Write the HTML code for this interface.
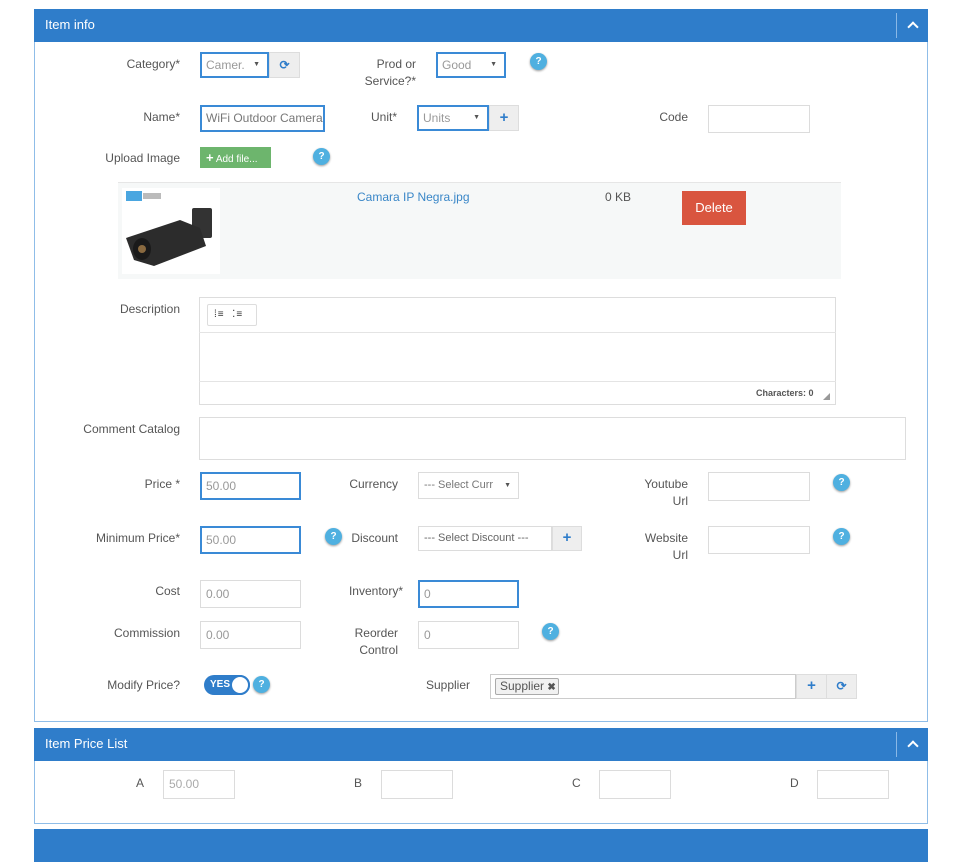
<!DOCTYPE html>
<html><head><meta charset="utf-8"><style>
*{box-sizing:border-box;margin:0;padding:0}
body{width:960px;height:833px;background:#fff;font-family:"Liberation Sans",sans-serif;font-size:12px;color:#555;position:relative;overflow:hidden}
.a{position:absolute}
.hd{position:absolute;left:34px;width:894px;height:33px;background:#2f7dca;color:#fff;font-size:13px;line-height:31px;padding-left:11px}
.hd .cv{position:absolute;right:0;top:4px;width:32px;height:25px;border-left:1px solid #8ab8e6}
.hd .cv:after{content:"";position:absolute;left:12px;top:10px;width:6px;height:6px;border-left:2.5px solid #fff;border-top:2.5px solid #fff;transform:rotate(45deg)}
.body{position:absolute;left:34px;width:894px;border:1px solid #8fbde8;border-top:none}
.l{position:absolute;text-align:right;width:170px;line-height:17px}
.in{position:absolute;border:1px solid #dcdcdc;background:#fff;padding-left:5px;color:#999;font-size:12px}
.bl{border:2px solid #3a8ad6;padding-left:4px}
.sel:after{content:"▼";position:absolute;right:7px;font-size:7px;color:#555}
.btn{position:absolute;background:#eee;border:1px solid #ddd;color:#2f7dca;text-align:center;font-weight:bold;font-size:15px}
.q{position:absolute;width:17px;height:17px;border-radius:50%;background:#4fb0e0;color:#fff;font-size:10px;font-weight:bold;text-align:center;line-height:17px;box-shadow:0 1px 2px #999}
</style></head><body>

<div class="hd" style="top:9px">Item info<div class="cv"></div></div>
<div class="body" style="top:42px;height:680px"></div>

<div class="l" style="left:10px;top:56px">Category*</div>
<div class="in bl sel" style="left:200px;top:52px;width:69px;height:26px;line-height:22px">Camer.</div>
<div class="btn" style="left:269px;top:52px;width:31px;height:26px;line-height:24px;font-size:12px">⟳</div>
<div class="l" style="left:246px;top:56px">Prod or<br>Service?*</div>
<div class="in bl sel" style="left:436px;top:52px;width:70px;height:26px;line-height:22px">Good</div>
<div class="q" style="left:530px;top:53px">?</div>

<div class="l" style="left:10px;top:109px">Name*</div>
<div class="in bl" style="left:200px;top:105px;width:125px;height:27px;line-height:23px;color:#777;font-size:12px;white-space:nowrap;overflow:hidden">WiFi Outdoor Camera</div>
<div class="l" style="left:227px;top:109px">Unit*</div>
<div class="in bl sel" style="left:417px;top:105px;width:72px;height:26px;line-height:22px">Units</div>
<div class="btn" style="left:489px;top:105px;width:30px;height:26px;line-height:23px">+</div>
<div class="l" style="left:518px;top:109px">Code</div>
<div class="in" style="left:708px;top:105px;width:102px;height:28px"></div>

<div class="l" style="left:10px;top:150px">Upload Image</div>
<div class="a" style="left:200px;top:147px;width:71px;height:21px;background:#6db56d;color:#fff;font-size:10px;line-height:21px;padding-left:6px"><b style="font-size:13px">+</b> Add file...</div>
<div class="q" style="left:313px;top:148px">?</div>

<div class="a" style="left:118px;top:182px;width:723px;height:97px;background:#f6f8f8;border-top:1px solid #e6e6e6"></div>
<div class="a" style="left:122px;top:188px;width:98px;height:86px;background:#fff"></div>
<div class="a" style="left:126px;top:191px;width:16px;height:10px;background:#4aa6e0"></div>
<div class="a" style="left:143px;top:193px;width:18px;height:6px;background:#bbb"></div>
<svg class="a" style="left:122px;top:200px" width="98" height="74"><rect x="70" y="8" width="20" height="30" rx="2" fill="#333"/><path d="M4 38 L58 20 L78 28 L84 46 L32 66 L12 60 Z" fill="#2c2c2c"/><ellipse cx="20" cy="49" rx="9" ry="11" fill="#1a1a1a"/><circle cx="20" cy="49" r="4" fill="#8a6a40"/></svg>
<div class="a" style="left:357px;top:190px;color:#3a87c8">Camara IP Negra.jpg</div>
<div class="a" style="left:605px;top:190px">0 KB</div>
<div class="a" style="left:682px;top:191px;width:64px;height:34px;background:#d9553f;color:#fff;font-size:13px;text-align:center;line-height:34px">Delete</div>

<div class="l" style="left:10px;top:301px">Description</div>
<div class="a" style="left:199px;top:297px;width:637px;height:108px;border:1px solid #ddd"></div>
<div class="a" style="left:199px;top:332px;width:637px;height:1px;background:#e4e4e4"></div>
<div class="a" style="left:199px;top:381px;width:637px;height:1px;background:#e4e4e4"></div>
<div class="a" style="left:207px;top:304px;width:50px;height:22px;border:1px solid #ddd;border-radius:2px;font-size:10px;color:#333;line-height:20px;padding-left:6px;letter-spacing:1px">⁞≡ &nbsp;⁚≡</div>
<div class="a" style="left:756px;top:388px;font-size:9px;font-weight:bold;color:#555">Characters: 0</div>
<div class="a" style="left:823px;top:393px;width:0;height:0;border-left:7px solid transparent;border-bottom:7px solid #999"></div>

<div class="l" style="left:10px;top:421px">Comment Catalog</div>
<div class="a" style="left:199px;top:417px;width:707px;height:43px;border:1px solid #ddd"></div>

<div class="l" style="left:10px;top:476px">Price *</div>
<div class="in bl" style="left:200px;top:472px;width:101px;height:28px;line-height:24px">50.00</div>
<div class="l" style="left:228px;top:476px">Currency</div>
<div class="in sel" style="left:418px;top:472px;width:101px;height:27px;line-height:25px;font-size:11px;color:#777">--- Select Curr</div>
<div class="l" style="left:518px;top:476px">Youtube<br>Url</div>
<div class="in" style="left:708px;top:472px;width:102px;height:29px"></div>
<div class="q" style="left:833px;top:474px">?</div>

<div class="l" style="left:10px;top:530px">Minimum Price*</div>
<div class="in bl" style="left:200px;top:526px;width:101px;height:28px;line-height:24px">50.00</div>
<div class="q" style="left:325px;top:528px">?</div>
<div class="l" style="left:228px;top:530px">Discount</div>
<div class="in" style="left:418px;top:526px;width:134px;height:25px;line-height:23px;font-size:11px;color:#666">--- Select Discount ---</div>
<div class="btn" style="left:552px;top:526px;width:30px;height:25px;line-height:22px">+</div>
<div class="l" style="left:518px;top:530px">Website<br>Url</div>
<div class="in" style="left:708px;top:526px;width:102px;height:28px"></div>
<div class="q" style="left:833px;top:528px">?</div>

<div class="l" style="left:10px;top:583px">Cost</div>
<div class="in" style="left:200px;top:580px;width:101px;height:28px;line-height:26px">0.00</div>
<div class="l" style="left:233px;top:583px">Inventory*</div>
<div class="in bl" style="left:418px;top:580px;width:101px;height:28px;line-height:24px">0</div>

<div class="l" style="left:10px;top:625px">Commission</div>
<div class="in" style="left:200px;top:621px;width:101px;height:28px;line-height:26px">0.00</div>
<div class="l" style="left:228px;top:625px">Reorder<br>Control</div>
<div class="in" style="left:418px;top:621px;width:101px;height:28px;line-height:26px">0</div>
<div class="q" style="left:542px;top:623px">?</div>

<div class="l" style="left:10px;top:677px">Modify Price?</div>
<div class="a" style="left:204px;top:675px;width:46px;height:20px;border-radius:10px;background:#2f7dca;color:#fff;font-size:10px;font-weight:bold;line-height:20px;padding-left:6px">YES</div>
<div class="a" style="left:230px;top:675px;width:20px;height:20px;border-radius:50%;background:#fff;border:2px solid #2f7dca"></div>
<div class="q" style="left:253px;top:676px">?</div>
<div class="l" style="left:300px;top:677px">Supplier</div>
<div class="a" style="left:490px;top:674px;width:306px;height:25px;border:1px solid #ccc"></div>
<div class="a" style="left:495px;top:678px;width:64px;height:17px;border:1px solid #aaa;background:#f1f1f1;border-radius:2px;font-size:12px;line-height:15px;padding-left:4px">Supplier <b style="font-size:10px">✖</b></div>
<div class="btn" style="left:796px;top:674px;width:31px;height:25px;line-height:22px">+</div>
<div class="btn" style="left:826px;top:674px;width:31px;height:25px;line-height:23px;font-size:12px">⟳</div>

<div class="hd" style="top:728px">Item Price List<div class="cv"></div></div>
<div class="body" style="top:761px;height:63px"></div>
<div class="a" style="left:136px;top:776px">A</div>
<div class="in" style="left:163px;top:770px;width:72px;height:29px;line-height:27px;color:#aaa">50.00</div>
<div class="a" style="left:354px;top:776px">B</div>
<div class="in" style="left:381px;top:770px;width:72px;height:29px"></div>
<div class="a" style="left:572px;top:776px">C</div>
<div class="in" style="left:599px;top:770px;width:72px;height:29px"></div>
<div class="a" style="left:790px;top:776px">D</div>
<div class="in" style="left:817px;top:770px;width:72px;height:29px"></div>

<div class="hd" style="top:829px"></div>
</body></html>
